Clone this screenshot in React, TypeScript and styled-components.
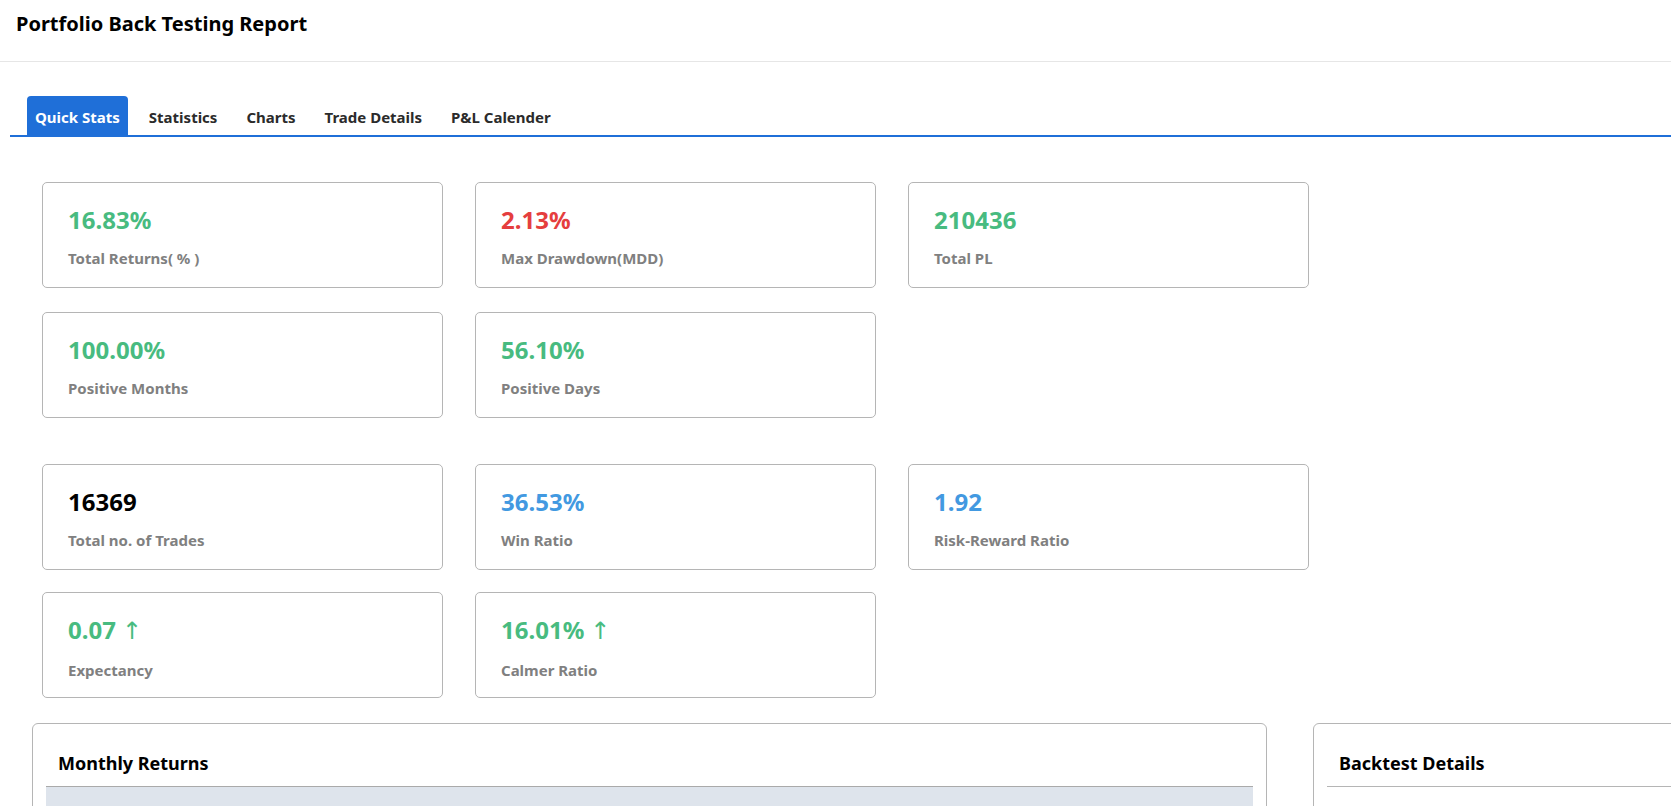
import styled, { createGlobalStyle } from "styled-components";

const GlobalStyle = createGlobalStyle`
  html, body {
    margin: 0;
    padding: 0;
    overflow: hidden;
    background: #fff;
  }
  body {
    font-family: "Noto Sans", "Open Sans", Arial, sans-serif;
    color: #000;
  }
`;

interface IStat {
  value: string;
  label: string;
  tone: "green" | "red" | "blue" | "black";
  arrow?: boolean;
}

const toneColor = {
  green: "#48bb80",
  red: "#e53e3e",
  blue: "#4299e1",
  black: "#000",
};

const tabs: string[] = ["Quick Stats", "Statistics", "Charts", "Trade Details", "P&L Calender"];

const returnRows: IStat[][] = [
  [
    { value: "16.83%", label: "Total Returns( % )", tone: "green" },
    { value: "2.13%", label: "Max Drawdown(MDD)", tone: "red" },
    { value: "210436", label: "Total PL", tone: "green" },
  ],
  [
    { value: "100.00%", label: "Positive Months", tone: "green" },
    { value: "56.10%", label: "Positive Days", tone: "green" },
  ],
];

const tradeRows: IStat[][] = [
  [
    { value: "16369", label: "Total no. of Trades", tone: "black" },
    { value: "36.53%", label: "Win Ratio", tone: "blue" },
    { value: "1.92", label: "Risk-Reward Ratio", tone: "blue" },
  ],
  [
    { value: "0.07", label: "Expectancy", tone: "green", arrow: true },
    { value: "16.01%", label: "Calmer Ratio", tone: "green", arrow: true },
  ],
];

const Header = styled.header`
  box-sizing: border-box;
  height: 62px;
  padding: 10px 16px 0;
  border-bottom: 1px solid #e6e6e6;
`;

const Title = styled.h1`
  margin: 0;
  font-size: 20px;
  line-height: 28px;
  font-weight: 700;
`;

const TabBar = styled.nav`
  display: flex;
  gap: 13px;
  margin: 34px 0 0 10px;
  padding-left: 17px;
  border-bottom: 2px solid #1f6fd8;
`;

const Tab = styled.button<{ $active?: boolean }>`
  height: 39px;
  padding: 3px 8px 0;
  border: none;
  border-radius: 4px 4px 0 0;
  background: ${(p) => (p.$active ? "#1f6fd8" : "transparent")};
  color: ${(p) => (p.$active ? "#fff" : "#2b2b2b")};
  font-family: inherit;
  font-size: 15px;
  font-weight: 700;
  cursor: pointer;
`;

const Content = styled.main`
  padding: 45px 0 0 32px;
`;

const StatSection = styled.section<{ $gap: number }>`
  display: flex;
  flex-direction: column;
  gap: ${(p) => p.$gap}px;
  margin: 0 0 46px 10px;

  &:last-of-type {
    margin-bottom: 25px;
  }
`;

const StatRow = styled.div`
  display: grid;
  grid-template-columns: repeat(3, 401px);
  gap: 32px;
`;

const StatCard = styled.div`
  box-sizing: border-box;
  height: 106px;
  padding: 21px 25px 0;
  border: 1px solid #b5b5b5;
  border-radius: 5px;
`;

const StatValue = styled.div<{ $tone: IStat["tone"] }>`
  font-size: 24px;
  line-height: 31px;
  font-weight: 700;
  color: ${(p) => toneColor[p.$tone]};
`;

const Arrow = styled.span`
  font-family: "DejaVu Sans", sans-serif;
  font-weight: 400;
  font-size: 24px;
  margin-left: 6px;
`;

const StatLabel = styled.div`
  margin-top: 13px;
  font-size: 15px;
  line-height: 20px;
  font-weight: 700;
  color: #808080;
`;

const PanelRow = styled.div`
  display: flex;
  gap: 46px;
`;

const Panel = styled.div<{ $width: number }>`
  flex-shrink: 0;
  box-sizing: border-box;
  width: ${(p) => p.$width}px;
  height: 140px;
  padding: 0 13px;
  border: 1px solid #b5b5b5;
  border-radius: 6px;
`;

const PanelTitle = styled.h2`
  margin: 0;
  padding: 27px 12px 0;
  height: 62px;
  box-sizing: border-box;
  font-size: 18px;
  line-height: 24px;
  font-weight: 700;
`;

const TableHead = styled.div`
  height: 40px;
  border-top: 1px solid #aaa;
  background: #dee4ec;
`;

const DetailsRule = styled.div`
  border-top: 1px solid #b5b5b5;
`;

const renderRows = (rows: IStat[][]) =>
  rows.map((row, i) => (
    <StatRow key={i}>
      {row.map((item) => (
        <StatCard key={item.label}>
          <StatValue $tone={item.tone}>
            {item.value}
            {item.arrow && <Arrow>↑</Arrow>}
          </StatValue>
          <StatLabel>{item.label}</StatLabel>
        </StatCard>
      ))}
    </StatRow>
  ));

const App: React.FC = () => {
  return (
    <>
      <GlobalStyle />
      <Header>
        <Title>Portfolio Back Testing Report</Title>
      </Header>
      <TabBar>
        {tabs.map((tab, i) => (
          <Tab key={tab} $active={i === 0}>
            {tab}
          </Tab>
        ))}
      </TabBar>
      <Content>
        <StatSection $gap={24}>{renderRows(returnRows)}</StatSection>
        <StatSection $gap={22}>{renderRows(tradeRows)}</StatSection>
        <PanelRow>
          <Panel $width={1235}>
            <PanelTitle>Monthly Returns</PanelTitle>
            <TableHead />
          </Panel>
          <Panel $width={620}>
            <PanelTitle>Backtest Details</PanelTitle>
            <DetailsRule />
          </Panel>
        </PanelRow>
      </Content>
    </>
  );
};

export default App;
